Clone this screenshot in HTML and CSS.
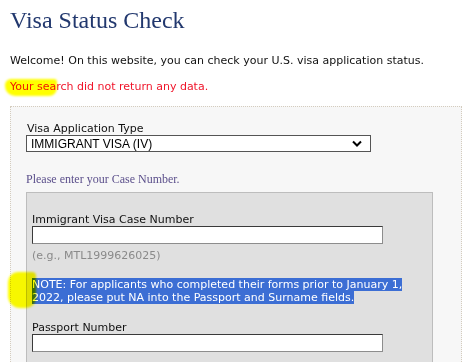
FILE: index.html
```html
<!DOCTYPE html>
<html>
<head>
<meta charset="utf-8">
<link rel="stylesheet" href="styles.css">
</head>
<body>
<div class="page">
  <h1 class="title">Visa Status Check</h1>
  <p class="welcome">Welcome! On this website, you can check your U.S. visa application status.</p>
  <p class="error">Your search did not return any data.</p>
  <div class="panel">
    <div class="field-type">
      <label class="type-label">Visa Application Type</label>
      <div class="select">
        <span>IMMIGRANT VISA (IV)</span>
        <svg class="chev" width="10" height="7" viewBox="0 0 10 7"><path d="M1 1.5 L5 5.5 L9 1.5" fill="none" stroke="#000" stroke-width="2"/></svg>
      </div>
    </div>
    <p class="prompt">Please enter your Case Number.</p>
    <div class="inner">
      <label class="lbl">Immigrant Visa Case Number</label>
      <div class="input"></div>
      <p class="hint">(e.g., MTL1999626025)</p>
      <p class="note"><span class="sel">NOTE: For applicants who completed their forms prior to January 1,<br>2022, please put NA into the Passport and Surname fields.</span></p>
      <label class="lbl lbl-pass">Passport Number</label>
      <div class="input"></div>
    </div>
  </div>
  <div class="mark mark1"></div>
  <div class="mark mark2"></div>
</div>
</body>
</html>
```
FILE: styles.css
```css
html, body { margin: 0; padding: 0; background: #fff; }
.page { position: relative; padding: 0 0 0 10px; height: 362px; overflow: hidden; }
.title {
  font-family: "Liberation Serif", "Times New Roman", serif;
  font-weight: normal;
  font-size: 24px;
  color: #22386e;
  margin: 0;
  padding-top: 7px;
  line-height: 26px;
}
.welcome, .error {
  font-family: "DejaVu Sans", Verdana, sans-serif;
  font-size: 11px;
  margin: 0;
  line-height: 14px;
}
.welcome { color: #111; margin-top: 21px; }
.error { color: #f0142a; margin-top: 12px; }
.panel {
  margin-top: 12px;
  width: 452px;
  border: 1px dotted #d4ccbe;
  background: #f7f7f7;
  padding: 15px 0 0 15px;
  box-sizing: border-box;
  height: 300px;
}
.type-label {
  display: block;
  font-family: "DejaVu Sans", "Segoe UI", sans-serif;
  font-size: 11px;
  color: #111;
  line-height: 13px;
  padding-left: 1px;
}
.select {
  width: 345px;
  height: 17px;
  box-sizing: border-box;
  border: 1px solid #555;
  background: #fff;
  display: flex;
  align-items: center;
  justify-content: space-between;
  padding: 0 8px 0 4px;
  font-family: "Liberation Sans", Arial, sans-serif;
  font-size: 12px;
  color: #000;
}
.chev { display: block; }
.prompt {
  font-family: "Liberation Serif", "Times New Roman", serif;
  font-size: 12px;
  color: #5b4f8b;
  margin: 19px 0 0 0;
  line-height: 16px;
}
.inner {
  margin-top: 5px;
  width: 407px;
  box-sizing: border-box;
  background: #e0e0e0;
  border: 1px solid #bdbdbd;
  padding: 20px 0 0 5px;
  height: 200px;
}
.lbl {
  display: block;
  font-family: "DejaVu Sans", Verdana, sans-serif;
  font-size: 11px;
  color: #111;
  line-height: 13px;
}
.input {
  width: 351px;
  height: 18px;
  box-sizing: border-box;
  background: #fff;
  border: 1px solid #8d8d8d;
  border-top-color: #3a3a3a;
  border-left-color: #3a3a3a;
}
.hint {
  font-family: "DejaVu Sans", Verdana, sans-serif;
  font-size: 11px;
  color: #8a8a8a;
  margin: 5px 0 0 0;
  line-height: 14px;
}
.note {
  font-family: "DejaVu Sans", Verdana, sans-serif;
  font-size: 11px;
  margin: 15px 0 0 0;
  line-height: 13px;
}
.sel { background: #3c6ed4; color: #fff; }
.lbl-pass { margin-top: 17px; }
.mark { position: absolute; background: #ffff00; mix-blend-mode: multiply; filter: blur(1px); }
.mark1 { left: 5px; top: 79px; width: 52px; height: 17px; border-radius: 6px 3px 8px 10px; }
.mark2 { left: 8px; top: 272px; width: 28px; height: 36px; border-radius: 10px 4px 10px 12px; }
```
